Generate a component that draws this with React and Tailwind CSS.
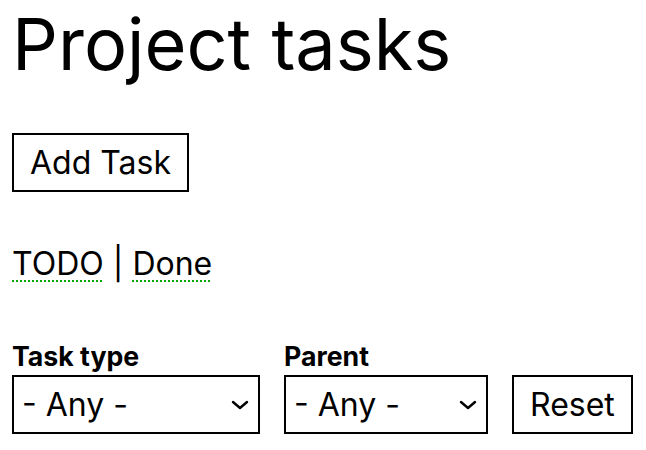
const Chevron = () => (
  <svg
    className="pointer-events-none absolute right-[11px] top-1/2 -translate-y-1/2"
    width="18"
    height="10"
    viewBox="0 0 18 10"
    fill="none"
  >
    <path d="M2 2l7 6 7-6" stroke="#000" strokeWidth="2.4" strokeLinecap="round" strokeLinejoin="round" />
  </svg>
);

const Filter = ({ label, width }) => (
  <div className="flex flex-col gap-[3px]">
    <label className="text-[26.7px] font-bold leading-[32px]">{label}</label>
    <div className={`relative ${width}`}>
      <select className="w-full appearance-none border-2 border-black bg-white pl-2 pr-10 py-2 text-[32px] leading-[39px] outline-none">
        <option>- Any -</option>
      </select>
      <Chevron />
    </div>
  </div>
);

const App = () => {
  return (
    <div className="min-h-screen bg-white px-3 text-black font-['Inter','Liberation_Sans',sans-serif]">
      <h1 className="text-[72px] font-normal leading-[87px]">Project tasks</h1>

      <button className="mt-[46px] border-2 border-black bg-white px-4 py-2 text-[32px] leading-[39px]">
        Add Task
      </button>

      <div className="mt-[52px] text-[32px] leading-[39px] whitespace-pre">
        <a href="#" className="underline decoration-dotted decoration-[#00a800] decoration-2 underline-offset-[5px]">
          TODO
        </a>
        {" | "}
        <a href="#" className="underline decoration-dotted decoration-[#00a800] decoration-2 underline-offset-[5px]">
          Done
        </a>
      </div>

      <div className="mt-[57px] flex items-end gap-6">
        <Filter label="Task type" width="w-[248px]" />
        <Filter label="Parent" width="w-[204px]" />
        <button className="border-2 border-black bg-white px-4 py-2 text-[32px] leading-[39px]">
          Reset
        </button>
      </div>
    </div>
  );
};

export default App;
